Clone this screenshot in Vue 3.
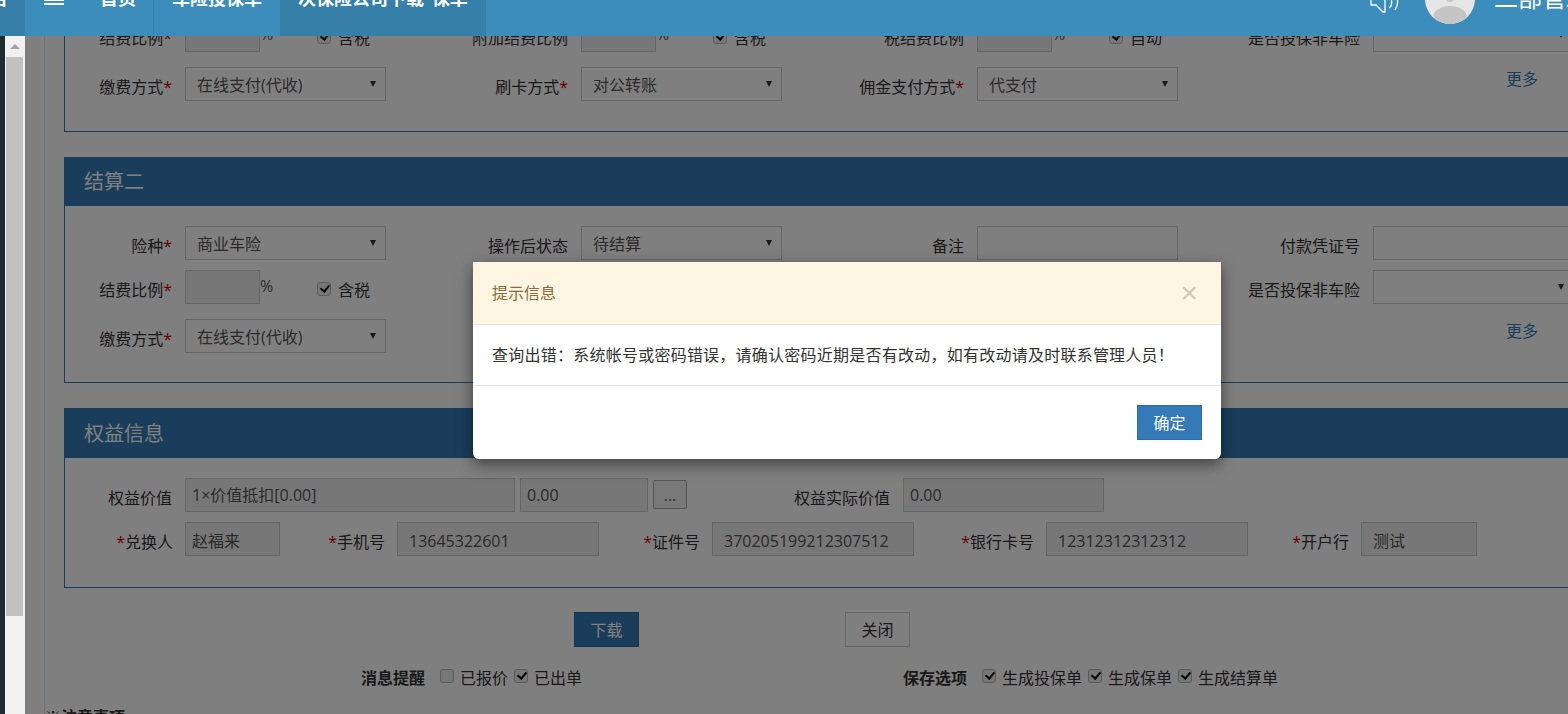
<script setup>
const rateRow = [
  { label: '结费比例', star: true, kind: 'rate', tax: '含税' },
  { label: '附加结费比例', kind: 'rate', tax: '含税' },
  { label: '税结费比例', kind: 'rate', tax: '自动' },
  { label: '是否投保非车险', kind: 'select', value: '' }
]
const payRow = [
  { label: '缴费方式', star: true, kind: 'select', value: '在线支付(代收)' },
  { label: '刷卡方式', star: true, kind: 'select', value: '对公转账' },
  { label: '佣金支付方式', star: true, kind: 'select', value: '代支付' }
]
const topRow = [
  { label: '险种', star: true, kind: 'select', value: '商业车险' },
  { label: '操作后状态', kind: 'select', value: '待结算' },
  { label: '备注', kind: 'input', value: '' },
  { label: '付款凭证号', kind: 'input', value: '' }
]
const people = [
  { label: '兑换人', lw: 107, fw: 95, value: '赵福来', tight: true },
  { label: '手机号', lw: 104, fw: 202, value: '13645322601' },
  { label: '证件号', lw: 100, fw: 202, value: '370205199212307512' },
  { label: '银行卡号', lw: 119, fw: 202, value: '12312312312312' },
  { label: '开户行', lw: 100, fw: 116, value: '测试' }
]
</script>

<template>
  <div class="app">
    <header class="topbar">
      <div class="logo"><span class="cut">台</span></div>
      <div class="toggle">
        <svg width="20" height="6" viewBox="0 0 20 6"><path d="M0 0h20M0 4h20" stroke="#fff" stroke-width="2.2" /></svg>
      </div>
      <nav class="tabs">
        <a class="tab home"><span class="cut">首页</span></a>
        <a class="tab"><span class="cut">车险投保单</span></a>
        <a class="tab active"><span class="cut">次保险公司下载 保单</span></a>
      </nav>
      <div class="top-right">
        <svg class="sound" width="30" height="14" viewBox="0 0 30 14" fill="none" stroke="#fff" stroke-width="1.3">
          <path d="M1 0v5h5l7 7h2V0" />
          <path d="M21.500 0c.6 3-.2 6-2 8" />
          <path d="M27.500 0c.4 3.500-.6 7-2.500 10" />
        </svg>
        <svg class="avatar" width="50" height="25" viewBox="0 0 50 25">
          <defs><clipPath id="avatar-clip"><circle cx="25" cy="-1" r="25" /></clipPath></defs>
          <g clip-path="url(#avatar-clip)">
            <rect width="50" height="25" fill="#e6e6e6" />
            <ellipse cx="25" cy="-6" rx="6" ry="8" fill="#c5c5c5" />
            <ellipse cx="25" cy="16" rx="16.500" ry="10" fill="#c5c5c5" />
          </g>
        </svg>
        <span class="user"><span class="cut">二部管理员</span></span>
      </div>
    </header>

    <div class="body">
      <div class="rail"></div>
      <div class="scrollbar">
        <i class="arrow"></i>
        <div class="thumb"></div>
      </div>

      <main class="content">
        <div class="sheet">
          <section class="panel first">
            <div class="panel-body">
              <div class="row">
                <div v-for="c in rateRow" :key="c.label" class="cell">
                  <label class="lab"><span>{{ c.label }}</span><em v-if="c.star">*</em></label>
                  <template v-if="c.kind === 'rate'">
                    <div class="field rate"></div>
                    <span class="pct">%</span>
                    <span class="check on"></span>
                    <span class="tax">{{ c.tax }}</span>
                  </template>
                  <div v-else class="field select">{{ c.value }}</div>
                </div>
              </div>
              <div class="row pay">
                <div v-for="c in payRow" :key="c.label" class="cell">
                  <label class="lab"><span>{{ c.label }}</span><em>*</em></label>
                  <div class="field select">{{ c.value }}</div>
                </div>
                <a class="more">更多</a>
              </div>
            </div>
          </section>

          <section class="panel second-panel">
            <h3 class="panel-head">结算二</h3>
            <div class="panel-body">
              <div class="row">
                <div v-for="c in topRow" :key="c.label" class="cell">
                  <label class="lab"><span>{{ c.label }}</span><em v-if="c.star">*</em></label>
                  <div class="field" :class="c.kind === 'select' ? 'select' : 'blank'">{{ c.value }}</div>
                </div>
              </div>
              <div class="row mid">
                <div v-for="c in rateRow" :key="c.label" class="cell">
                  <label class="lab"><span>{{ c.label }}</span><em v-if="c.star">*</em></label>
                  <template v-if="c.kind === 'rate'">
                    <div class="field rate"></div>
                    <span class="pct">%</span>
                    <span class="check on"></span>
                    <span class="tax">{{ c.tax }}</span>
                  </template>
                  <div v-else class="field select">{{ c.value }}</div>
                </div>
              </div>
              <div class="row pay">
                <div v-for="c in payRow" :key="c.label" class="cell">
                  <label class="lab"><span>{{ c.label }}</span><em>*</em></label>
                  <div class="field select">{{ c.value }}</div>
                </div>
                <a class="more">更多</a>
              </div>
            </div>
          </section>

          <section class="panel third-panel">
            <h3 class="panel-head">权益信息</h3>
            <div class="panel-body rights">
              <div class="row">
                <label class="lab"><span>权益价值</span></label>
                <div class="field ro tight w330">1×价值抵扣[0.00]</div>
                <div class="field ro tight w128">0.00</div>
                <button class="dots">...</button>
                <label class="lab actual"><span>权益实际价值</span></label>
                <div class="field ro tight">0.00</div>
              </div>
              <div class="row second">
                <template v-for="p in people" :key="p.label">
                  <label class="lab" :style="{ width: p.lw + 'px' }"><em>*</em><span>{{ p.label }}</span></label>
                  <div class="field ro" :class="{ tight: p.tight }" :style="{ width: p.fw + 'px' }">{{ p.value }}</div>
                </template>
              </div>
            </div>
          </section>

          <div class="actions">
            <button class="btn primary">下载</button>
            <button class="btn plain">关闭</button>
          </div>

          <div class="options">
            <strong>消息提醒</strong>
            <span class="check"></span><span class="opt">已报价</span>
            <span class="check on"></span><span class="opt">已出单</span>
            <strong class="save">保存选项</strong>
            <span class="check on"></span><span class="opt">生成投保单</span>
            <span class="check on"></span><span class="opt">生成保单</span>
            <span class="check on"></span><span class="opt">生成结算单</span>
          </div>

          <div class="notes">※注意事项</div>
        </div>

        <div class="overlay"></div>
        <div class="modal">
          <div class="modal-head">
            <span>提示信息</span>
            <span class="close">×</span>
          </div>
          <div class="modal-body">查询出错：系统帐号或密码错误，请确认密码近期是否有改动，如有改动请及时联系管理人员！</div>
          <div class="modal-foot"><button class="ok">确定</button></div>
        </div>
      </main>
    </div>
  </div>
</template>

<style>
html, body { margin: 0; overflow: hidden; }
</style>

<style scoped>
.app {
  width: 1568px;
  height: 714px;
  overflow: hidden;
  display: flex;
  flex-direction: column;
  font: 16px/20px "Open Sans", "Noto Sans CJK SC", sans-serif;
  color: #333;
}
.topbar {
  flex: none;
  height: 36px;
  background: #3c8dbc;
  display: flex;
  overflow: hidden;
  color: #fff;
  font-weight: 700;
  font-size: 18px;
}
.cut { display: block; margin-top: -12px; white-space: nowrap; }
.logo {
  width: 25px;
  height: 36px;
  flex: none;
  background: #367fa9;
  text-indent: -10px;
  overflow: hidden;
}
.toggle { width: 55px; flex: none; padding-left: 19px; box-sizing: border-box; }
.toggle svg { display: block; }
.tabs { display: flex; }
.tab { height: 36px; padding: 0 18px; white-space: nowrap; word-spacing: 3px; }
.tab.home { padding: 0 17px 0 20px; border-right: 1px solid #367fa9; }
.tab.active { background: #367fa9; }
.top-right { margin-left: auto; display: flex; width: 198px; flex: none; white-space: nowrap; overflow: hidden; }
.sound { display: block; flex: none; }
.avatar { display: block; margin-left: 25px; flex: none; }
.user { margin-left: 19px; font-size: 24px; font-weight: 400; }

.body { flex: 1; min-height: 0; display: flex; }
.rail { width: 5px; background: #1e2c32; flex: none; }
.scrollbar { width: 20px; flex: none; background: #f1f1f1; padding-top: 8px; box-sizing: border-box; }
.arrow {
  display: block;
  width: 0;
  margin: 0 auto 8px;
  border: 5px solid transparent;
  border-top: 0;
  border-bottom: 5px solid #a3a3a3;
}
.thumb { width: 17px; height: 559px; margin-left: 1px; background: #c1c1c1; }

.content { flex: 1; min-width: 0; position: relative; overflow: hidden; background: #fff; }
.sheet {
  margin: -18px 0 0 19px;
  padding-left: 19px;
  border-left: 1px solid #dde3ea;
  width: 1600px;
  height: 760px;
  box-sizing: border-box;
}
.panel { border: 1px solid #337ab7; margin-bottom: 25px; }
.panel.first { border-top: 0; }
.third-panel { margin-bottom: 24px; }
.panel-head {
  margin: 0;
  height: 48px;
  background: #337ab7;
  color: #fff;
  font-size: 20px;
  font-weight: 400;
  line-height: 48px;
  padding-left: 19px;
}
.third-panel .panel-head { height: 49px; line-height: 50px; }
.panel-body { padding: 20px 0 29px; }
.panel.first .panel-body { padding: 0 0 30px; }
.panel-body.rights { padding-bottom: 31px; }
.row { display: flex; align-items: flex-start; }
.row.mid { margin-top: 10px; }
.row.pay { margin-top: 15px; }
.cell { width: 396px; flex: none; display: flex; align-items: flex-start; }
.lab {
  width: 107px;
  flex: none;
  margin-right: 13px;
  display: flex;
  justify-content: flex-end;
  padding-top: 10px;
  line-height: 20px;
  white-space: nowrap;
  box-sizing: border-box;
}
.lab span { flex: none; }
.lab em { color: #c00; font-style: normal; flex: none; }
.second .lab span { margin-right: -1px; }
.field {
  width: 201px;
  height: 34px;
  flex: none;
  box-sizing: border-box;
  border: 1px solid #ccc;
  color: #555;
  line-height: 34px;
  padding-left: 11px;
  white-space: nowrap;
  overflow: hidden;
  position: relative;
}
.select::after {
  content: "";
  position: absolute;
  right: 9px;
  top: 13px;
  border: 3.500px solid transparent;
  border-bottom: 0;
  border-top: 6px solid #333;
}
.rate { width: 75px; background: #eee; }
.ro { background: #eee; line-height: 32px; }
.tight { padding-left: 6px; }
.second .ro { line-height: 36px; }
.pct { width: 57px; flex: none; color: #555; line-height: 20px; padding-top: 6px; }
.tax { margin-left: 7px; padding-top: 10px; line-height: 20px; }
.check {
  width: 14px;
  height: 14px;
  flex: none;
  box-sizing: border-box;
  border: 1px solid #b8b8b8;
  border-radius: 3px;
  background: #eee;
  position: relative;
  display: inline-block;
}
.cell .check { margin-top: 12px; }
.check.on::after {
  content: "";
  position: absolute;
  left: 3.500px;
  top: 0;
  width: 4px;
  height: 7px;
  border: solid #111;
  border-width: 0 2px 2px 0;
  transform: rotate(40deg);
}
.more { margin: 2px 0 0 253px; color: #337ab7; flex: none; }

.rights .row.second { margin-top: 10px; }
.w330 { width: 330px; }
.w128 { width: 128px; margin-left: 5px; }
.dots {
  width: 34px;
  height: 29px;
  flex: none;
  margin: 2px 0 0 5px;
  padding: 0;
  background: #f2f2f2;
  border: 1px solid #aaa;
  border-radius: 2px;
  font: inherit;
  color: #555;
}
.lab.actual { width: 203px; }

.actions { display: flex; padding-left: 510px; gap: 206px; }
.btn { width: 65px; height: 35px; padding: 0; font: inherit; box-sizing: border-box; border: 1px solid #ccc; }
.primary { background: #337ab7; border-color: #2e6da4; color: #fff; }
.plain { background: #fff; color: #333; }

.options { display: flex; align-items: flex-start; margin-top: 21px; padding-left: 297px; height: 20px; line-height: 20px; }
.options strong { width: 65px; white-space: nowrap; margin-right: 14px; }
.options .save { margin-left: 315px; margin-right: 14px; }
.options .check { margin-right: 6px; margin-top: 1px; }
.options .opt { margin-right: 6px; white-space: nowrap; }
.notes { margin: 19px 0 0 -19px; font-weight: 700; }

.overlay { position: absolute; inset: 0; background: rgba(0, 0, 0, 0.5); }
.modal {
  position: absolute;
  left: 448px;
  top: 226px;
  width: 748px;
  height: 197px;
  background: #fff;
  border-radius: 0 0 6px 6px;
  box-shadow: 0 5px 15px rgba(0, 0, 0, 0.5);
  display: flex;
  flex-direction: column;
}
.modal-head {
  height: 63px;
  flex: none;
  box-sizing: border-box;
  background: #fef6e3;
  border-bottom: 1px solid #e5e5e5;
  color: #8a6d3b;
  padding: 0 19px;
  display: flex;
  align-items: center;
  justify-content: space-between;
}
.close { font-size: 30px; font-weight: 400; color: #cdc9b6; font-family: "Liberation Sans", sans-serif; margin-right: 4px; }
.modal-body {
  height: 61px;
  flex: none;
  box-sizing: border-box;
  border-bottom: 1px solid #e5e5e5;
  padding: 20px 19px 0;
  color: #333;
  white-space: nowrap;
  letter-spacing: 0.24px;
}
.modal-foot { flex: 1; display: flex; justify-content: flex-end; padding: 19px 19px 0 0; }
.ok { width: 65px; height: 35px; padding: 1px 0 0; box-sizing: border-box; font: inherit; color: #fff; background: #337ab7; border: 1px solid #2e6da4; }
</style>
